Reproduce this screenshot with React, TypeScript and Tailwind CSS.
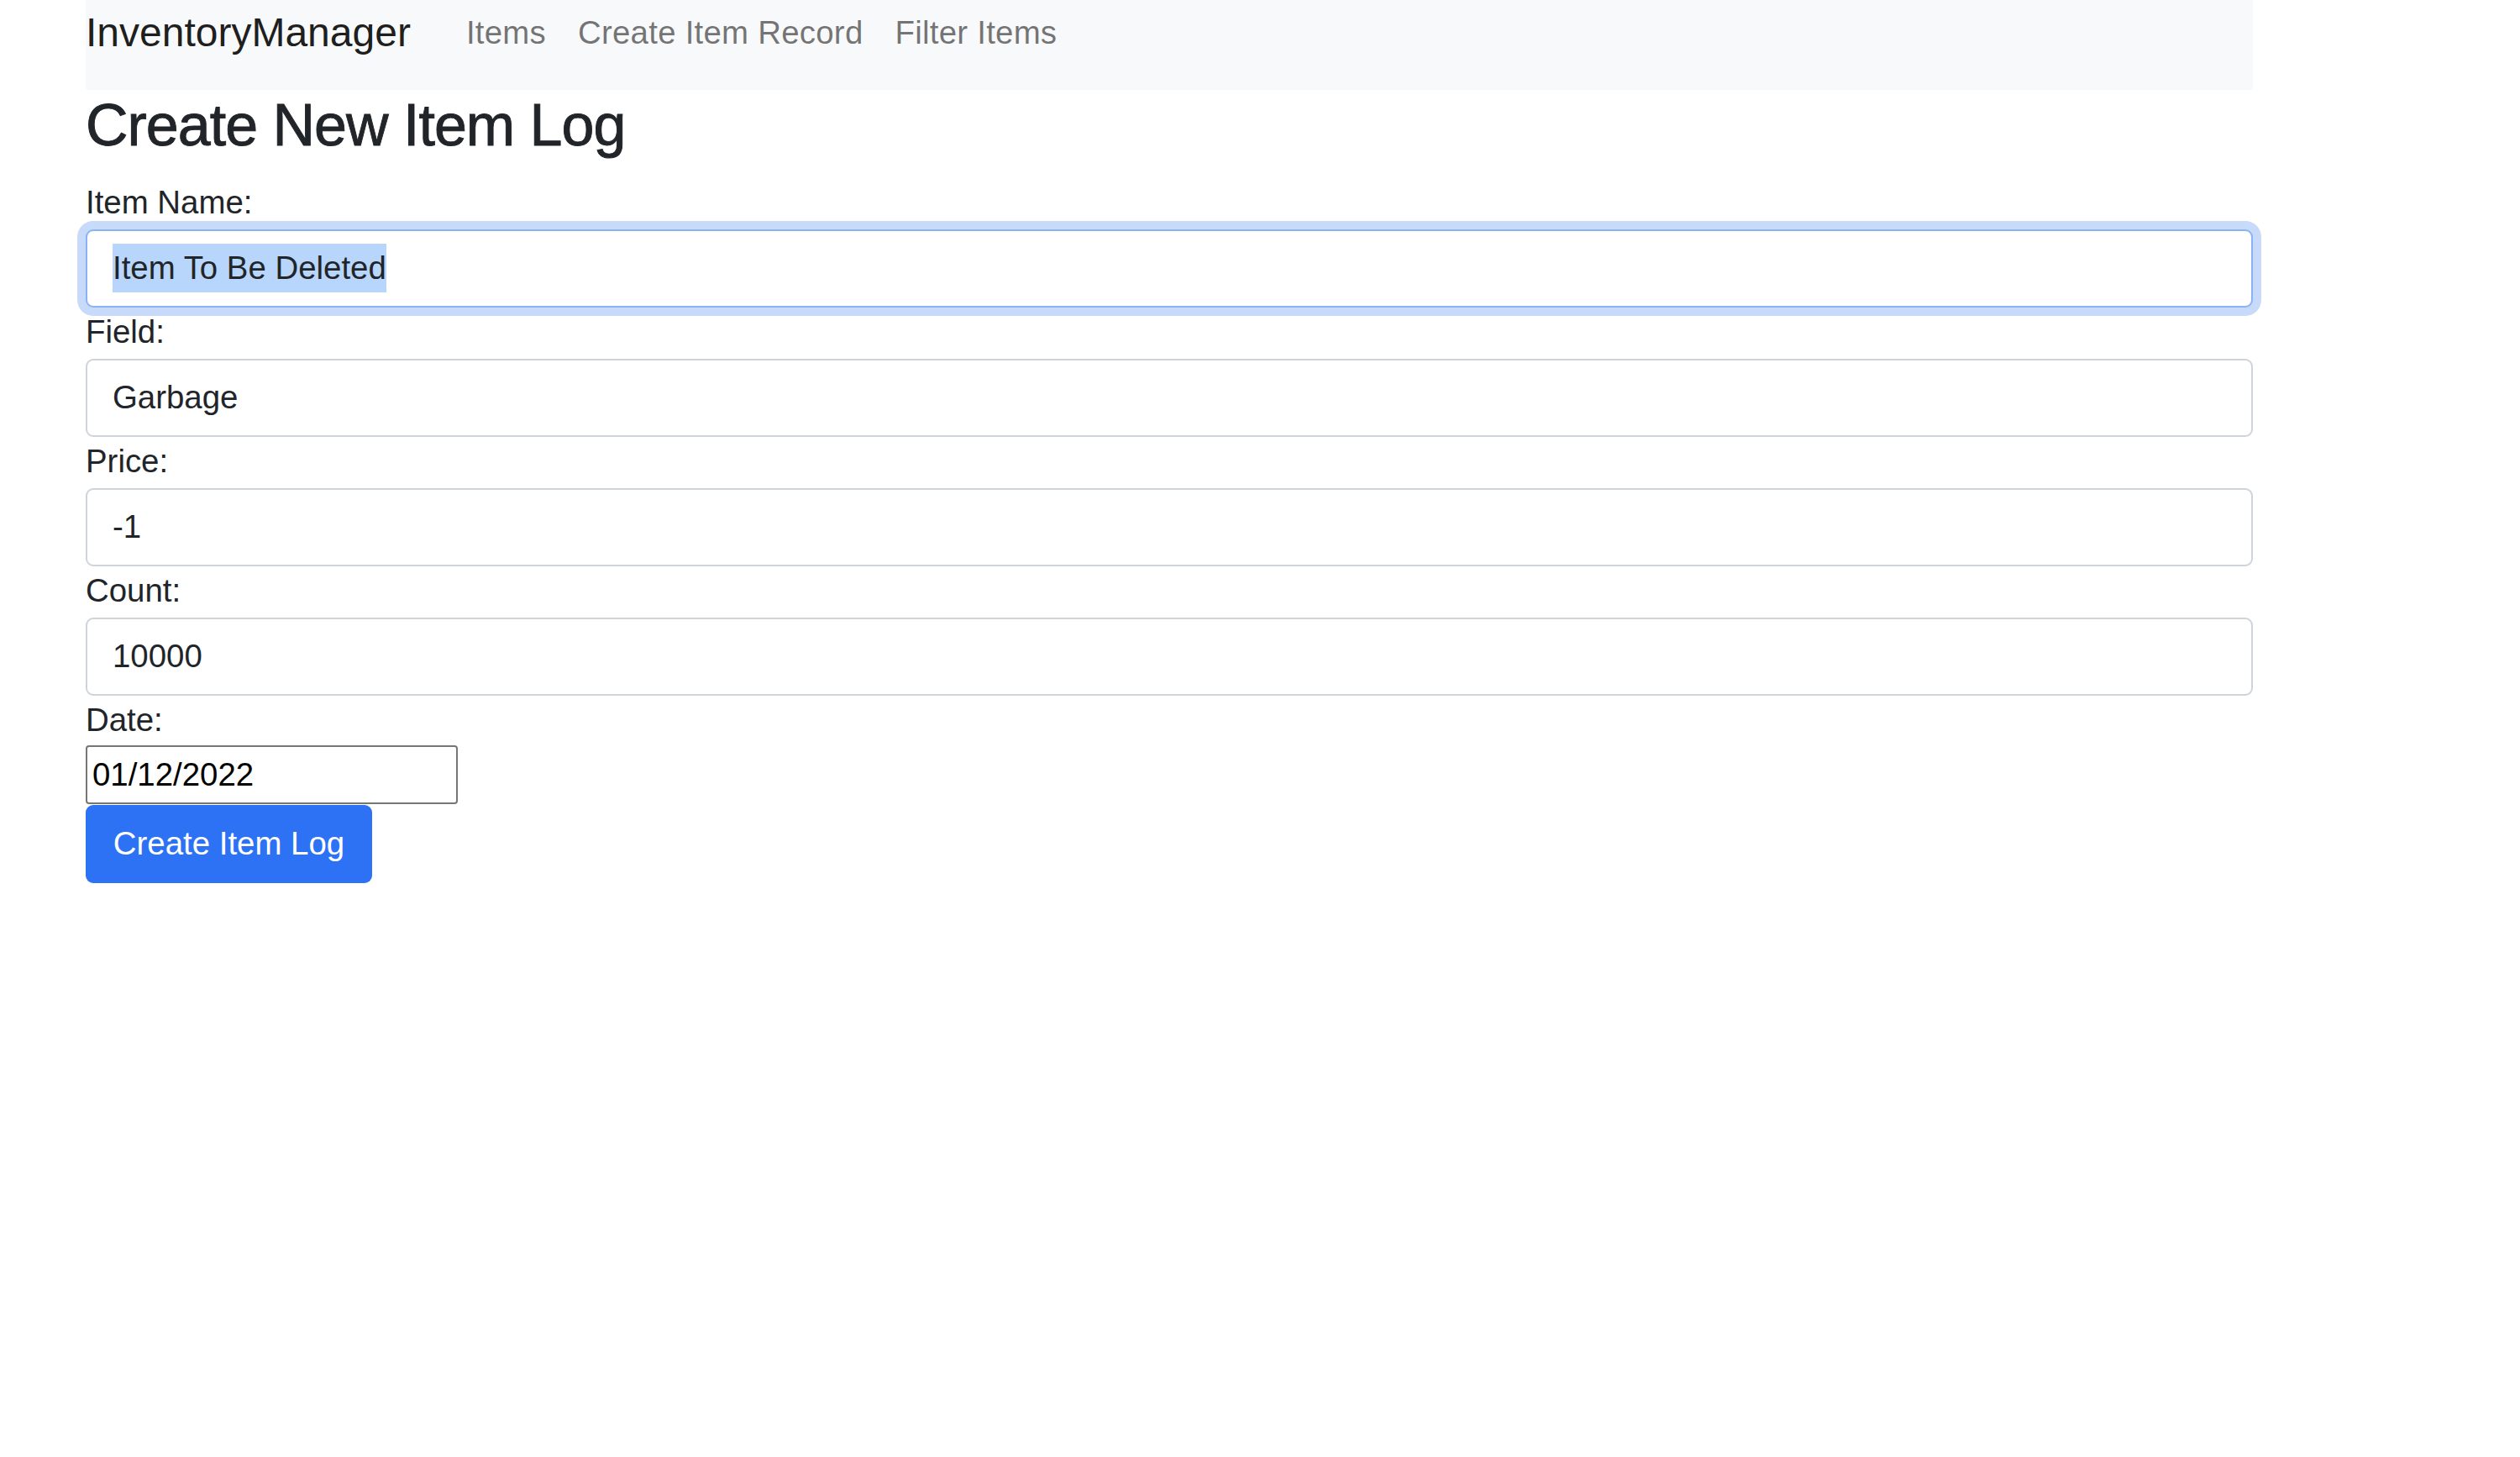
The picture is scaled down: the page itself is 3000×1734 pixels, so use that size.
import { useState } from "react";

const fields = [
  { label: "Item Name:", value: "Item To Be Deleted", focused: true },
  { label: "Field:", value: "Garbage" },
  { label: "Price:", value: "-1" },
  { label: "Count:", value: "10000" },
];

function NavBar() {
  return (
    <nav className="flex h-[107px] items-start bg-[#f8f9fa]">
      <a className="mr-[47px] pt-[3px] text-[48px] leading-[72px] text-black/90">InventoryManager</a>
      <a className="px-[19px] pt-[10px] text-[38.4px] leading-[57.6px] tracking-[0.25px] text-black/55">Items</a>
      <a className="px-[19px] pt-[10px] text-[38.4px] leading-[57.6px] tracking-[0.25px] text-black/55">
        Create Item Record
      </a>
      <a className="px-[19px] pt-[10px] text-[38.4px] leading-[57.6px] tracking-[0.25px] text-black/55">
        Filter Items
      </a>
    </nav>
  );
}

function Field({ label, value, focused }: { label: string; value: string; focused?: boolean }) {
  return (
    <div className="flex flex-col">
      <label className="pb-[3.4px] text-[38.4px] leading-[57.6px] text-[#212529]">{label}</label>
      {focused ? (
        // focused input with its text selected
        <div className="flex h-[93px] items-center rounded-[9px] border-2 border-[#8ab3f6] bg-white px-[30px] shadow-[0_0_0_10px_#c8dafa]">
          <span className="bg-[#b8d6fb] text-[38.4px] leading-[58px] text-[#212529]">{value}</span>
        </div>
      ) : (
        <input
          readOnly
          value={value}
          className="h-[93px] w-full rounded-[9px] border-2 border-[#ced4da] bg-white px-[30px] text-[38.4px] leading-[57.6px] text-[#212529] outline-none"
        />
      )}
    </div>
  );
}

export default function App() {
  const [date] = useState("01/12/2022");

  return (
    <div className="min-h-screen bg-white font-['Liberation_Sans',Arial,sans-serif]">
      <div className="ml-[102px] w-[2580px]">
        <NavBar />
        <h1 className="mb-[21px] text-[70px] leading-[84px] tracking-[-1px] text-[#212529] [-webkit-text-stroke:0.9px_#212529]">
          Create New Item Log
        </h1>
        <form className="flex flex-col">
          {fields.map((f) => (
            <Field key={f.label} label={f.label} value={f.value} focused={f.focused} />
          ))}
          <label className="pb-[1px] text-[38.4px] leading-[57.6px] text-[#212529]">Date:</label>
          <input
            readOnly
            value={date}
            className="h-[70px] w-[443px] rounded-[4px] border-2 border-[#767676] bg-white px-[6px] text-[38.4px] text-black outline-none"
          />
          <div className="mt-[1px]">
            <button
              type="button"
              className="h-[93px] w-[341px] rounded-[9px] bg-[#2d72f5] text-[38.4px] leading-[57.6px] text-white"
            >
              Create Item Log
            </button>
          </div>
        </form>
      </div>
    </div>
  );
}
